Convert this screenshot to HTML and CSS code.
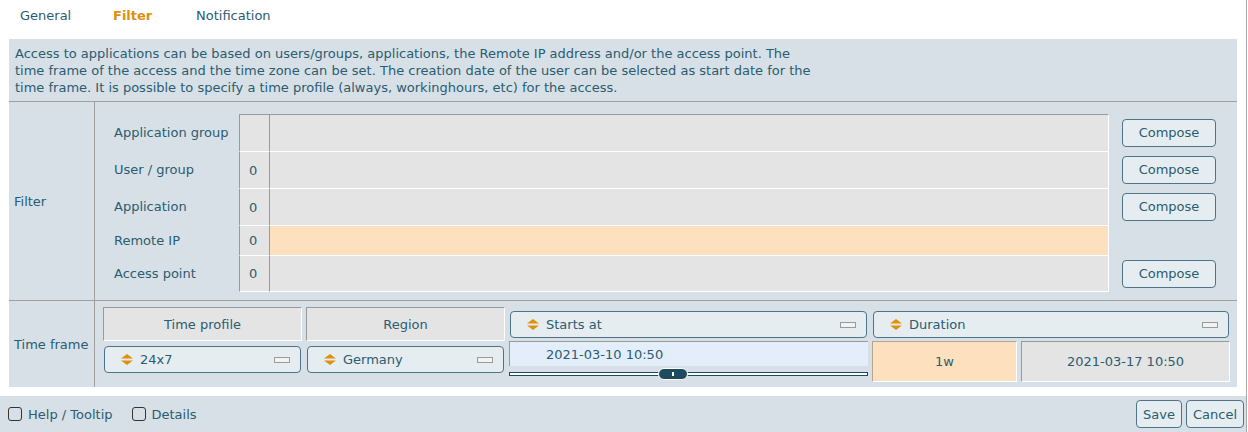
FILE: index.html
```html
<!DOCTYPE html>
<html>
<head>
<meta charset="utf-8">
<link rel="stylesheet" href="styles.css">
</head>
<body>
<div class="page">
  <div class="tabs">
    <span class="tab">General</span>
    <span class="tab active">Filter</span>
    <span class="tab">Notification</span>
  </div>
  <div class="panel">
    <div class="desc">Access to applications can be based on users/groups, applications, the Remote IP address and/or the access point. The<br>time frame of the access and the time zone can be set. The creation date of the user can be selected as start date for the<br>time frame. It is possible to specify a time profile (always, workinghours, etc) for the access.</div>
    <div class="section filter-section">
      <div class="sec-label">Filter</div>
      <div class="filter-grid">
        <div class="row-label">Application group</div>
        <div class="cell count first"></div>
        <div class="cell wide first"></div>
        <div class="btn-cell"><button class="btn compose">Compose</button></div>

        <div class="row-label">User / group</div>
        <div class="cell count">0</div>
        <div class="cell wide"></div>
        <div class="btn-cell"><button class="btn compose">Compose</button></div>

        <div class="row-label">Application</div>
        <div class="cell count">0</div>
        <div class="cell wide"></div>
        <div class="btn-cell"><button class="btn compose">Compose</button></div>

        <div class="row-label short">Remote IP</div>
        <div class="cell count">0</div>
        <div class="cell wide orange"></div>
        <div class="btn-cell"></div>

        <div class="row-label">Access point</div>
        <div class="cell count last">0</div>
        <div class="cell wide last"></div>
        <div class="btn-cell"><button class="btn compose">Compose</button></div>
      </div>
    </div>
    <div class="section time-section">
      <div class="sec-label">Time frame</div>
      <div class="time-grid">
        <div class="tcol">
          <div class="head">Time profile</div>
          <div class="select low"><svg class="arr" width="12" height="11" viewBox="0 0 12 11"><polygon points="0,4.5 6,0 12,4.5" /><polygon points="0,6.5 6,11 12,6.5" /></svg><span class="sel-text">24x7</span><span class="handle"></span></div>
        </div>
        <div class="tcol">
          <div class="head">Region</div>
          <div class="select low"><svg class="arr" width="12" height="11" viewBox="0 0 12 11"><polygon points="0,4.5 6,0 12,4.5" /><polygon points="0,6.5 6,11 12,6.5" /></svg><span class="sel-text">Germany</span><span class="handle"></span></div>
        </div>
        <div class="tcol">
          <div class="select top"><svg class="arr" width="12" height="11" viewBox="0 0 12 11"><polygon points="0,4.5 6,0 12,4.5" /><polygon points="0,6.5 6,11 12,6.5" /></svg><span class="sel-text">Starts at</span><span class="handle"></span></div>
          <div class="datefield">2021-03-10 10:50</div>
          <div class="slider"><span class="thumb"></span></div>
        </div>
        <div class="tcol">
          <div class="select top"><svg class="arr" width="12" height="11" viewBox="0 0 12 11"><polygon points="0,4.5 6,0 12,4.5" /><polygon points="0,6.5 6,11 12,6.5" /></svg><span class="sel-text">Duration</span><span class="handle"></span></div>
          <div class="dur-row">
            <div class="box orangebox">1w</div>
            <div class="box greybox">2021-03-17 10:50</div>
          </div>
        </div>
      </div>
    </div>
  </div>
  <div class="footer">
    <label class="chk"><span class="box-chk"></span>Help / Tooltip</label>
    <label class="chk"><span class="box-chk"></span>Details</label>
    <span class="spacer"></span>
    <button class="btn">Save</button>
    <button class="btn">Cancel</button>
  </div>
</div>
</body>
</html>
```

FILE: styles.css
```css
html, body {
  margin: 0;
  padding: 0;
  background: #fff;
}
body {
  font-family: "DejaVu Sans", "Liberation Sans", sans-serif;
  font-size: 13px;
  color: #2b5c70;
}
.page {
  width: 1246px;
  height: 432px;
  border-right: 1px solid #a8a8a8;
  display: flex;
  flex-direction: column;
}
.tabs {
  height: 30px;
  display: flex;
  align-items: center;
  padding-left: 20px;
}
.tab {
  display: inline-block;
  line-height: 30px;
  padding-top: 1px;
}
.tab:nth-child(1) { width: 93px; }
.tab:nth-child(2) { width: 83px; }
.tab.active {
  color: #e0900f;
  font-weight: bold;
}
.panel {
  margin: 9px 0 0 9px;
  width: 1228px;
  background: #d7e0e6;
}
.desc {
  height: 56px;
  padding: 6px 0 0 6px;
  line-height: 17px;
  border-bottom: 1px solid #a0a0a0;
}
.section {
  display: grid;
  grid-template-columns: 86px 1fr;
}
.sec-label {
  border-right: 1px solid #a0a0a0;
  display: flex;
  align-items: center;
  padding-left: 5px;
}
.filter-section {
  height: 198px;
  border-bottom: 1px solid #a0a0a0;
}
.filter-grid {
  display: grid;
  grid-template-columns: 126px 30px 840px 1fr;
  padding: 12px 0 0 18px;
  align-content: start;
}
.row-label {
  display: flex;
  align-items: center;
  height: 37px;
  padding-left: 1px;
}
.row-label.short { height: 30px; }
.cell {
  background: #e4e4e4;
  border-left: 1px solid #9a9a9a;
  border-top: 1px solid #fff;
  display: flex;
  align-items: center;
  padding-left: 9px;
}
.cell.first { border-top: 1px solid #9a9a9a; }
.cell.last { border-bottom: 1px solid #fff; }
.cell.wide { border-right: 1px solid #fff; }
.cell.orange { background: #fde0bd; }
.btn-cell {
  display: flex;
  align-items: center;
  padding-left: 13px;
}
.btn {
  font-family: "DejaVu Sans", "Liberation Sans", sans-serif;
  font-size: 13px;
  color: #2b5c70;
  background: #e5edf1;
  border: 1px solid #4d7488;
  border-radius: 4px;
  height: 28px;
  padding: 0 6px;
  margin: 0;
}
.btn.compose {
  width: 94px;
  height: 28px;
}
.time-section {
  height: 86px;
}
.time-grid {
  display: grid;
  grid-template-columns: 199px 199px 359px 358px;
  column-gap: 4px;
  padding: 6px 0 0 8px;
  align-items: start;
}
.tcol {
  display: flex;
  flex-direction: column;
}
.head {
  height: 32px;
  background: #e4e4e4;
  border-top: 1px solid #9a9a9a;
  border-left: 1px solid #9a9a9a;
  border-bottom: 1px solid #fff;
  border-right: 1px solid #fff;
  display: flex;
  align-items: center;
  justify-content: center;
}
.select {
  height: 25px;
  background: #e5edf1;
  border: 1px solid #4d7488;
  border-radius: 4px;
  display: flex;
  align-items: center;
  padding: 0 10px 0 16px;
}
.select.low { margin: 5px 1px 0 1px; }
.select.top { margin: 4px 1px 0 1px; }
.arr {
  fill: #e0900f;
  margin-right: 7px;
}
.sel-text { flex: 1; }
.handle {
  width: 14px;
  height: 4px;
  border: 1px solid #9a9a9a;
  background: #f2f2f2;
}
.datefield {
  margin-top: 3px;
  height: 24px;
  background: #e3eefa;
  border-top: 1px solid #9a9a9a;
  border-left: 1px solid #9a9a9a;
  display: flex;
  align-items: center;
  padding-left: 36px;
}
.slider {
  position: relative;
  margin-top: 6px;
  height: 2px;
  border: 1px solid #1e4b5e;
  background: #fff;
}
.thumb {
  position: absolute;
  left: 148px;
  top: -5px;
  width: 28px;
  height: 10px;
  border-radius: 6px;
  background: #1e4b5e;
  border: 1px solid #fff;
}
.thumb::after {
  content: "";
  position: absolute;
  left: 13px;
  top: 3px;
  width: 2px;
  height: 4px;
  background: #fff;
}
.dur-row {
  display: flex;
  gap: 4px;
  margin-top: 3px;
}
.box {
  height: 39px;
  display: flex;
  align-items: center;
  justify-content: center;
  border-top: 1px solid #9a9a9a;
  border-left: 1px solid #9a9a9a;
  border-bottom: 1px solid #fff;
  border-right: 1px solid #fff;
}
.orangebox {
  width: 143px;
  background: #fde0bd;
  border-top-color: #b8a590;
  border-left-color: #b8a590;
}
.greybox {
  flex: 1;
  background: #e4e4e4;
}
.footer {
  margin-top: 9px;
  height: 36px;
  background: #d7e0e6;
  display: flex;
  align-items: center;
  padding: 0 2px 0 8px;
  width: 1236px;
}
.chk {
  display: flex;
  align-items: center;
  margin-right: 19px;
}
.box-chk {
  display: inline-block;
  width: 12px;
  height: 12px;
  border: 1.5px solid #333;
  border-radius: 3px;
  margin-right: 6px;
  background: #d7e0e6;
}
.spacer { flex: 1; }
.footer .btn { margin-left: 4px; }
```
